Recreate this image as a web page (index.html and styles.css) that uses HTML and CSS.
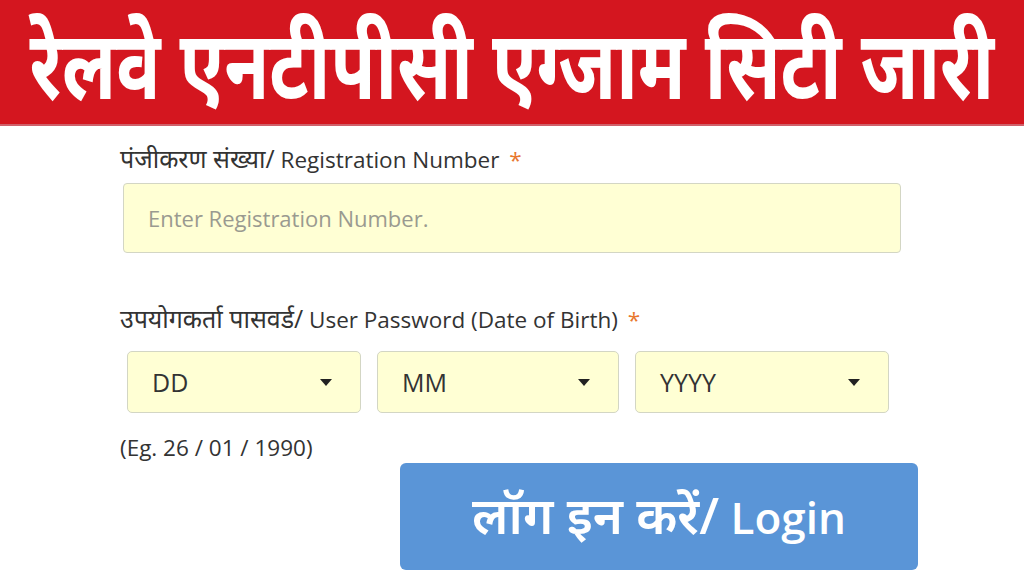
FILE: index.html
```html
<!DOCTYPE html>
<html lang="hi">
<head>
  <meta charset="UTF-8">
  <meta name="viewport" content="width=device-width, initial-scale=1.0">
  <title>रेलवे एनटीपीसी एग्जाम सिटी जारी</title>
  <link rel="stylesheet" href="styles.css">
</head>
<body>
  <div class="banner">
    <h1>रेलवे एनटीपीसी एग्जाम सिटी जारी</h1>
  </div>
  <form class="login-form">
    <div class="form-group">
      <label for="regNo"><span class="hi">पंजीकरण संख्या/</span> Registration Number <span class="req">*</span></label>
      <input type="text" id="regNo" class="reg-input" placeholder="Enter Registration Number.">
    </div>
    <div class="form-group dob-group">
      <label><span class="hi">उपयोगकर्ता पासवर्ड/</span> User Password (Date of Birth) <span class="req">*</span></label>
      <div class="dob-row">
        <div class="select-box dd"><span>DD</span><span class="caret"></span></div>
        <div class="select-box mm"><span>MM</span><span class="caret"></span></div>
        <div class="select-box yy"><span>YYYY</span><span class="caret"></span></div>
      </div>
      <p class="hint">(Eg. 26 / 01 / 1990)</p>
    </div>
    <button type="submit" class="login-btn"><span class="hi">लॉग इन करें/</span> Login</button>
  </form>
</body>
</html>
```

FILE: styles.css
```css
body {
  font-family: "Open Sans", "Noto Sans", sans-serif;
  background-color: #fff;
  margin: 0;
  padding: 0;
  color: #333;
}
.banner {
  height: 124px;
  background-color: #d4161f;
  border-bottom: 2px solid #d0606a;
  display: flex;
  align-items: center;
  justify-content: center;
}
.banner h1 {
  margin: 0;
  color: #fff;
  font-size: 72px;
  font-weight: bold;
  line-height: 1.2;
  white-space: nowrap;
  transform: scale(1.02, 1.333);
}
.login-form {
  padding: 17px 0 0 120px;
  width: 800px;
}
.hi {
  font-size: 1.11em;
}
.form-group label {
  display: block;
  font-size: 22.5px;
  line-height: 30px;
  color: #333;
  margin-bottom: 8px;
}
.req {
  color: #e8772e;
  margin-left: 4px;
}
.reg-input {
  display: block;
  box-sizing: border-box;
  width: 778px;
  height: 70px;
  margin-left: 3px;
  padding: 0 24px;
  font-family: inherit;
  font-size: 22px;
  background-color: #ffffd4;
  border: 1.5px solid #d3d6c4;
  border-radius: 4px;
}
.reg-input::placeholder {
  color: #9a9a90;
}
.dob-group {
  margin-top: 50px;
}
.dob-group label {
  margin-bottom: 16px;
}
.dob-row {
  display: flex;
  gap: 16px;
  padding-left: 7px;
}
.select-box {
  box-sizing: border-box;
  height: 62px;
  display: flex;
  align-items: center;
  justify-content: space-between;
  padding: 0 28px 0 24px;
  font-size: 25px;
  color: #333;
  background-color: #ffffd4;
  border: 1.5px solid #d3d6c4;
  border-radius: 5px;
}
.select-box.dd { width: 234px; }
.select-box.mm { width: 242px; }
.select-box.yy { width: 254px; }
.caret {
  width: 0;
  height: 0;
  border-left: 6px solid transparent;
  border-right: 6px solid transparent;
  border-top: 7px solid #222;
}
.hint {
  margin: 19px 0 0;
  font-size: 22.5px;
}
.login-btn {
  display: block;
  width: 518px;
  height: 107px;
  margin: 0 0 0 280px;
  padding: 0 0 5px;
  background-color: #5a95d7;
  color: #fff;
  border: none;
  border-radius: 6px;
  font-family: inherit;
  font-size: 44px;
  font-weight: 600;
  cursor: pointer;
}
.login-btn .hi {
  font-size: 1.16em;
}
```
